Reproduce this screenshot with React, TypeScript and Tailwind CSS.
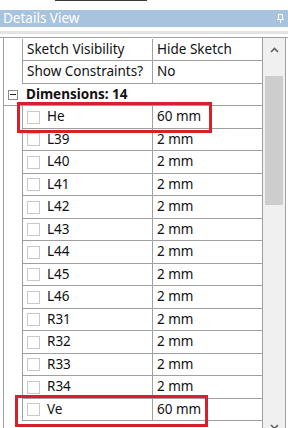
import React from 'react';

// Details View panel: property grid with sketch dimensions, two rows highlighted.

type Row =
  | { kind: 'prop'; name: string; value: string }
  | { kind: 'group'; name: string }
  | { kind: 'dim'; name: string; value: string };

const rows: Row[] = [
  { kind: 'prop', name: 'Sketch Visibility', value: 'Hide Sketch' },
  { kind: 'prop', name: 'Show Constraints?', value: 'No' },
  { kind: 'group', name: 'Dimensions: 14' },
  { kind: 'dim', name: 'He', value: '60 mm' },
  { kind: 'dim', name: 'L39', value: '2 mm' },
  { kind: 'dim', name: 'L40', value: '2 mm' },
  { kind: 'dim', name: 'L41', value: '2 mm' },
  { kind: 'dim', name: 'L42', value: '2 mm' },
  { kind: 'dim', name: 'L43', value: '2 mm' },
  { kind: 'dim', name: 'L44', value: '2 mm' },
  { kind: 'dim', name: 'L45', value: '2 mm' },
  { kind: 'dim', name: 'L46', value: '2 mm' },
  { kind: 'dim', name: 'R31', value: '2 mm' },
  { kind: 'dim', name: 'R32', value: '2 mm' },
  { kind: 'dim', name: 'R33', value: '2 mm' },
  { kind: 'dim', name: 'R34', value: '2 mm' },
  { kind: 'dim', name: 'Ve', value: '60 mm' },
];

const CheckBox = () => (
  <span className="w-[13px] h-[13px] border border-[#c9c9c9] bg-white shrink-0" />
);

const GridRow: React.FC<{ row: Row; tall: boolean }> = ({ row, tall }) => {
  const h = tall ? 'h-[23px]' : 'h-[22px]';
  if (row.kind === 'group') {
    return (
      <div className={`${h} flex items-center border-b border-[#a0a0a0] bg-white`}>
        <div className="w-[18px] flex justify-center">
          <span className="w-[10px] h-[10px] border border-[#8a8a8a] flex items-center justify-center">
            <span className="w-[6px] h-px bg-[#222]" />
          </span>
        </div>
        <span className="pl-[4px] font-bold text-[#111]">{row.name}</span>
      </div>
    );
  }
  return (
    <div className={`${h} flex`}>
      <div className="w-[18px] bg-white" />
      <div className="flex flex-1 border-l border-b border-[#a0a0a0] bg-white">
        <div className="w-[130px] flex items-center gap-[7px] pl-[4px] border-r border-[#a0a0a0]">
          {row.kind === 'dim' && <CheckBox />}
          <span className="text-[#111] whitespace-nowrap">{row.name}</span>
        </div>
        <div className="flex-1 flex items-center pl-[4px] text-[#111] whitespace-nowrap">{row.value}</div>
      </div>
    </div>
  );
};

export default function App() {
  return (
    <div
      className="relative w-[288px] h-[428px] overflow-hidden bg-white text-[13.5px] leading-none"
      style={{ fontFamily: '"Segoe UI", "Noto Sans", sans-serif' }}
    >
      {/* top strip */}
      <div className="h-[10px] bg-white">
        <div className="ml-[55px] w-[92px] h-px bg-[#3a3a3a]" />
      </div>

      {/* title bar */}
      <div className="h-[17px] bg-[#a8c3de] flex items-center justify-between pl-[3px] pr-[4px]">
        <span className="text-white text-[13.5px]">Details View</span>
        <svg width="7" height="9" viewBox="0 0 7 9">
          <rect x="1.5" y="0.5" width="4" height="5" fill="none" stroke="#fff" />
          <line x1="0" y1="5.5" x2="7" y2="5.5" stroke="#fff" />
          <line x1="3.5" y1="6" x2="3.5" y2="9" stroke="#fff" />
        </svg>
      </div>

      <div className="h-[4px] bg-white" />
      <div className="h-[3px] bg-[#e3e3e3]" />
      <div className="h-[3px] bg-white" />

      {/* grid body */}
      <div className="flex h-[391px] border-t border-[#a0a0a0]">
        <div className="w-[3px] bg-white" />
        <div className="w-[259px] border-l border-[#a0a0a0] pt-px">
          {rows.map((r, i) => (
            <GridRow key={r.name} row={r} tall={i % 2 === 1} />
          ))}
        </div>
        {/* scrollbar */}
        <div className="w-[24px] bg-[#f0f0f0] border-l border-r border-[#a0a0a0] flex flex-col items-center">
          <svg width="9" height="6" viewBox="0 0 9 6" className="mt-[9px]">
            <path d="M1 5 L4.5 1.5 L8 5" fill="none" stroke="#606060" strokeWidth="1.6" />
          </svg>
          <div className="mt-[23px] w-[18px] h-[129px] bg-[#cdcdcd]" />
          <div className="flex-1" />
          <svg width="9" height="6" viewBox="0 0 9 6" className="mb-[-2px]">
            <path d="M1 1 L4.5 4.5 L8 1" fill="none" stroke="#606060" strokeWidth="1.6" />
          </svg>
        </div>
        <div className="flex-1 bg-white" />
      </div>

      {/* red highlight boxes */}
      <div className="absolute left-[17px] top-[102px] w-[195px] h-[31px] border-[3px] border-[#d9202a]" />
      <div className="absolute left-[15px] top-[395px] w-[193px] h-[32px] border-[3px] border-[#d9202a]" />
    </div>
  );
}
